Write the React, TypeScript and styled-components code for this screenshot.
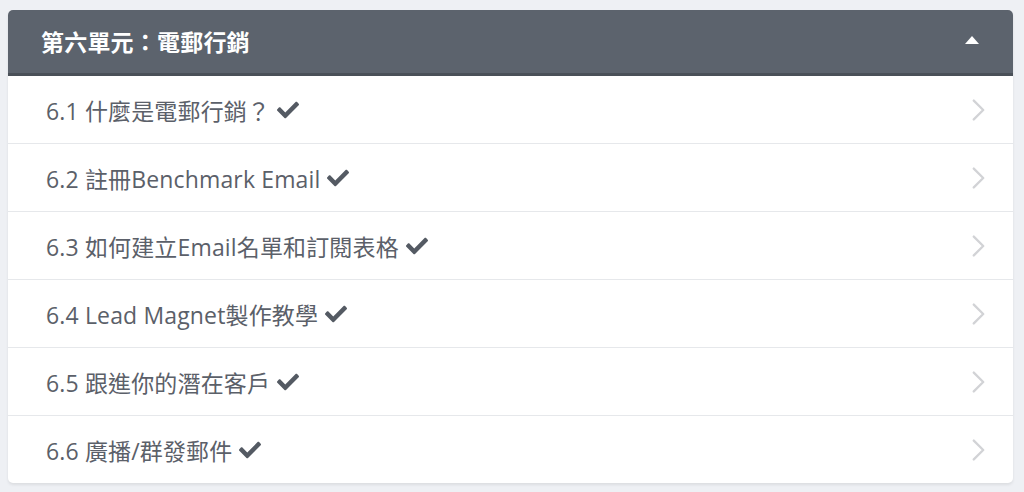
import styled, { createGlobalStyle } from "styled-components";
import { FaCheck } from "react-icons/fa";

const lessons = [
  "6.1 什麼是電郵行銷？",
  "6.2 註冊Benchmark Email",
  "6.3 如何建立Email名單和訂閱表格",
  "6.4 Lead Magnet製作教學",
  "6.5 跟進你的潛在客戶",
  "6.6 廣播/群發郵件",
];

export default function App() {
  return (
    <>
      <GlobalStyle />
      <StPage>
        <StCard>
          <StHeader>
            <StTitle>第六單元：電郵行銷</StTitle>
            <StCaret viewBox="0 0 14 8">
              <polygon points="0,8 7,0 14,8" />
            </StCaret>
          </StHeader>
          {lessons.map((lesson) => (
            <StRow key={lesson}>
              <StLabel>
                {lesson}
                <StCheck>
                  <FaCheck size={22} />
                </StCheck>
              </StLabel>
              <StChevron viewBox="0 0 12 21">
                <polyline points="1.5,1.5 10.5,10.5 1.5,19.5" />
              </StChevron>
            </StRow>
          ))}
        </StCard>
      </StPage>
    </>
  );
}

const GlobalStyle = createGlobalStyle`
  html, body {
    margin: 0;
    padding: 0;
    background: #eef0f4;
  }
  body {
    font-family: "Open Sans", "Noto Sans CJK TC", sans-serif;
  }
`;

const StPage = styled.div`
  padding: 10px 11px 10px 8px;
`;

const StCard = styled.div`
  background: #ffffff;
  border-radius: 5px;
  overflow: hidden;
  box-shadow: 0 2px 3px rgba(0, 0, 0, 0.08);
`;

const StHeader = styled.div`
  display: flex;
  align-items: center;
  justify-content: space-between;
  height: 63px;
  padding: 0 34px 0 33px;
  background: #5c636d;
  border-bottom: 3px solid #4a5058;
`;

const StTitle = styled.div`
  color: #ffffff;
  font-size: 23px;
  font-weight: 700;
  letter-spacing: 0.2px;
  margin-top: -2px;
`;

const StCaret = styled.svg`
  width: 14px;
  height: 8px;
  fill: #ffffff;
  margin-top: -4px;
`;

const StRow = styled.div`
  display: flex;
  align-items: center;
  justify-content: space-between;
  height: 67px;
  padding: 0 28px 0 38px;
  border-bottom: 1px solid #e6e8eb;

  &:last-child {
    border-bottom: none;
  }
`;

const StLabel = styled.div`
  display: flex;
  align-items: center;
  color: #5b6069;
  font-size: 23px;
  letter-spacing: 0.15px;
`;

const StCheck = styled.span`
  display: inline-flex;
  margin-left: 7px;
  color: #545a63;
`;

const StChevron = styled.svg`
  width: 13px;
  height: 22px;
  fill: none;
  stroke: #d2d3d6;
  stroke-width: 2.2;
  stroke-linecap: round;
  stroke-linejoin: round;
`;
